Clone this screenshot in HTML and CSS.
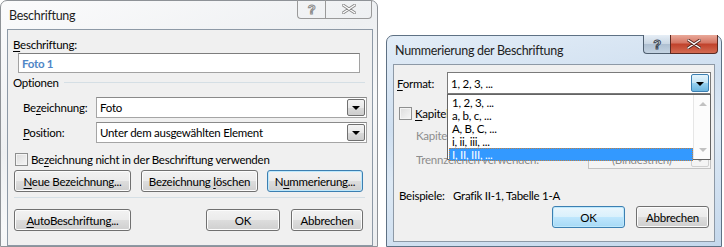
FILE: index.html
```html
<!DOCTYPE html>
<html lang="de">
<head>
<meta charset="utf-8"/>
<title>Beschriftung</title>
<link rel="stylesheet" href="styles.css">
</head>
<body>
<div class="desk">

	<!-- Dialog 1: Beschriftung (inaktiv) -->
	<div class="win win-left">
		<div class="titlebar">
			<span class="title">Beschriftung</span>
			<div class="capbtns">
				<span class="capbtn cap-help">?</span>
				<span class="capbtn cap-close">
					<svg width="14" height="10" viewBox="0 0 14 10"><path d="M1 1 L13 9 M13 1 L1 9" stroke="#8a8a8a" stroke-width="3" stroke-linecap="round"/><path d="M1 1 L13 9 M13 1 L1 9" stroke="#fff" stroke-width="1.2" stroke-linecap="round"/></svg>
				</span>
			</div>
		</div>
		<div class="client client-left">
			<div class="row lbl-top"><span><u>B</u>eschriftung:</span></div>
			<div class="textbox">Foto 1</div>
			<div class="group-head"><span>Optionen</span><span class="group-line"></span></div>
			<div class="row field first-field">
				<span class="field-lbl">Be<u>z</u>eichnung:</span>
				<div class="combo wide"><span class="combo-text">Foto</span><span class="combo-btn"><i class="arrow"></i></span></div>
			</div>
			<div class="row field">
				<span class="field-lbl"><u>P</u>osition:</span>
				<div class="combo wide"><span class="combo-text">Unter dem ausgewählten Element</span><span class="combo-btn"><i class="arrow"></i></span></div>
			</div>
			<div class="row check-row">
				<span class="checkbox"></span>
				<span>Be<u>z</u>eichnung nicht in der Beschriftung verwenden</span>
			</div>
			<div class="row btn-row">
				<span class="btn w117"><span><u>N</u>eue Bezeichnung...</span></span>
				<span class="btn w117"><span>Bezeichnung <u>l</u>öschen</span></span>
				<span class="btn w96 focus"><span>N<u>u</u>mmerierung...</span></span>
			</div>
			<div class="sep"></div>
			<div class="row btn-row bottom-row">
				<span class="btn w117"><span><u>A</u>utoBeschriftung...</span></span>
				<span class="btn w74 push">OK</span>
				<span class="btn w72">Abbrechen</span>
			</div>
		</div>
	</div>

	<!-- Dialog 2: Nummerierung der Beschriftung (aktiv) -->
	<div class="win win-right">
		<div class="titlebar">
			<span class="title">Nummerierung der Beschriftung</span>
			<div class="capbtns">
				<span class="capbtn cap-help">?</span>
				<span class="capbtn cap-close">
					<svg width="14" height="10" viewBox="0 0 14 10"><path d="M1 1 L13 9 M13 1 L1 9" stroke="#5a2a22" stroke-width="3.2" stroke-linecap="round"/><path d="M1 1 L13 9 M13 1 L1 9" stroke="#fff" stroke-width="1.4" stroke-linecap="round"/></svg>
				</span>
			</div>
		</div>
		<div class="client client-right">
			<div class="row fmt-row">
				<span class="fmt-lbl"><u>F</u>ormat:</span>
				<div class="combo fmt-combo"><span class="combo-text">1, 2, 3, ...</span><span class="combo-btn hot"><i class="arrow"></i></span></div>
			</div>
			<div class="row check-row kap-row">
				<span class="checkbox"></span>
				<span><u>K</u>apitelnummer einbeziehen</span>
			</div>
			<div class="row sub-row dis kap2">
				<span class="sub-lbl">Kapitel beginnt mit Formatvorlage:</span>
				<div class="combo dis-combo"><span class="combo-text">Überschrift 1</span><span class="combo-btn"><i class="arrow"></i></span></div>
			</div>
			<div class="row sub-row dis trenn">
				<span class="sub-lbl">Trennzeichen verwenden:</span>
				<div class="combo dis-combo"><span class="combo-text"><span class="dash">-</span>(Bindestrich)</span><span class="combo-btn"><i class="arrow"></i></span></div>
			</div>
			<div class="row beisp">
				<span class="beisp-lbl">Beispiele:</span>
				<span>Grafik II-1, Tabelle 1-A</span>
			</div>
			<div class="row btn-row right-btns">
				<span class="btn w73 default">OK</span>
				<span class="btn w73">Abbrechen</span>
			</div>

			<!-- aufgeklappte Liste -->
			<div class="droplist">
				<ul>
					<li>1, 2, 3, ...</li>
					<li>a, b, c, ...</li>
					<li>A, B, C, ...</li>
					<li>i, ii, iii, ...</li>
					<li class="sel">I, II, III, ...</li>
				</ul>
				<div class="vscroll">
					<i class="sarrow up"></i>
					<i class="sarrow down"></i>
				</div>
			</div>
		</div>
	</div>

</div>
</body>
</html>
```

FILE: styles.css
```css
*{margin:0; padding:0; box-sizing:border-box;}
li{list-style:none;}
u{text-decoration:underline; text-underline-offset:2px;}

body{ background:#fff; font-family:"Lato","Liberation Sans",sans-serif; font-size:11.5px; letter-spacing:-0.25px; color:#000; }
.desk{ position:relative; width:724px; height:247px; overflow:hidden; }

/* Fenster */
.win{ position:absolute; border:1px solid #8e9297; border-radius:7px 7px 0 0; display:flex; flex-direction:column; }
	.win-left{ left:0; top:0; width:378px; height:247px;
		background:linear-gradient(160deg,#fbfbfc 0%,#eef0f2 40%,#f7f8f9 60%,#eceef0 100%); }
	.win-right{ left:386px; top:35px; width:336px; height:212px; border-color:#5e7184;
		background:linear-gradient(170deg,#e3edf7 0%,#cfdff0 35%,#dde9f5 55%,#c5d8ec 100%); }

.titlebar{ position:relative; height:28px; display:flex; align-items:center; flex-shrink:0; }
	.title{ padding-left:8px; font-size:12.5px; letter-spacing:-0.3px; color:#1e1e1e; }
	.capbtns{ position:absolute; top:-1px; right:5px; display:flex; }
		.capbtn{ height:19px; display:flex; align-items:center; justify-content:center; border:1px solid #9a9a9a; border-top:none; }
		.win-left .cap-help{ width:28px; border-radius:0 0 0 4px; border-right:none; color:#fff; -webkit-text-stroke:1px #8a8a8a; font-weight:bold; font-size:13px; font-family:"Liberation Sans",sans-serif; }
		.win-left .cap-close{ width:47px; border-radius:0 0 4px 0; }
	.win-right .capbtns{ right:3px; }
		.win-right .capbtn{ height:19px; border-color:#4f5f70; }
		.win-right .cap-help{ width:27px; border-right:none; border-radius:0 0 0 4px; background:linear-gradient(#e6eef6,#c9d6e3 50%,#aebfd1 51%,#c4d3e2); color:#fff; -webkit-text-stroke:1px #3d4a57; font-weight:bold; font-size:13px; font-family:"Liberation Sans",sans-serif; }
		.win-right .cap-close{ width:48px; border-radius:0 0 4px 0; border-color:#5b2a22; background:linear-gradient(#e9a99a,#d47462 45%,#c0412b 50%,#d36b52 100%); }

.client{ position:relative; background:#f0f0f0; border:1px solid #8d99a6; }
	.client-left{ margin-left:6px; width:366px; height:217px; padding-top:6px; }
	.client-right{ margin-left:6px; width:322px; height:178px; }

.row{ display:flex; align-items:center; white-space:nowrap; }

/* Dialog 1 */
.lbl-top{ height:16px; padding-left:5px; }
.textbox{ margin:1px 0 0 10px; width:342px; height:20px; border:1px solid #a2a2a2; border-top-color:#7d7d7d; background:#fff;
	padding-left:3px; display:flex; align-items:center; font-weight:bold; color:#4f86c6; }
.group-head{ display:flex; align-items:center; height:16px; margin-top:1px; padding-left:5px; }
	.group-line{ flex:1; height:1px; background:#d5dfe5; margin:0 7px 0 5px; }
.field{ height:21px; padding-left:15px; margin-top:4px; }
	.first-field{ margin-top:7px; }
	.field-lbl{ width:73px; }
.combo{ display:flex; align-items:stretch; height:21px; border:1px solid #a5a5a5; border-top-color:#8a8a8a; background:#fff; }
	.combo.wide{ width:271px; }
	.combo-text{ flex:1; display:flex; align-items:center; padding-left:3px; white-space:nowrap; overflow:hidden; }
	.combo-btn{ width:18px; margin:1px 1px 1px 0; border:1px solid #707070; border-radius:2px;
		background:linear-gradient(#f4f4f4,#e9e9e9 50%,#dadada 51%,#cdcdcd); display:flex; align-items:center; justify-content:center; }
	.arrow{ width:0; height:0; border-left:4px solid transparent; border-right:4px solid transparent; border-top:4px solid #000; margin-top:1px; }

.check-row{ height:16px; margin-top:8px; padding-left:7px; }
	.checkbox{ width:13px; height:13px; border:1px solid #8e8f8f; background:linear-gradient(135deg,#dcdcdc,#f6f6f6); box-shadow:inset 0 0 0 1px #f4f4f4; margin-right:3px; flex-shrink:0; }

.btn-row{ margin-top:3px; padding-left:6px; }
	.btn{ height:22px; display:flex; align-items:center; justify-content:center; border:1px solid #707070; border-radius:3px;
		background:linear-gradient(#f2f2f2,#ebebeb 50%,#dddddd 51%,#cfcfcf); box-shadow:inset 0 0 0 1px #fcfcfc; white-space:nowrap; }
	.btn + .btn{ margin-left:10px; }
	.w117{ width:117px; }
	.w96{ width:96px; margin-left:9px !important; }
	.w74{ width:74px; }
	.w73{ width:73px; }
	.w72{ width:72px; margin-left:11px !important; }
	.btn.default{ border-color:#3c7fb1; box-shadow:inset 0 0 0 1px #bde8fc; background:linear-gradient(#eaf6fd,#d9f0fc 50%,#bee6fd 51%,#a7d9f5); }
	.btn.focus{ border-color:#3c7fb1; box-shadow:inset 0 0 0 1px #bde8fc; }
.sep{ height:1px; background:#d5dfe5; margin:5px 7px 0 6px; }
.bottom-row{ margin-top:11px; padding-right:9px; }
	.push{ margin-left:auto !important; }

/* Dialog 2 */
.fmt-row{ margin-top:7px; padding-left:3px; height:22px; }
	.fmt-lbl{ width:50px; }
	.fmt-combo{ width:264px; height:22px; border-color:#7a7a7a; }
	.combo-btn.hot{ border-color:#3c7fb1; background:linear-gradient(#e5f4fc,#c4e5f6 50%,#98d1ef 51%,#6cb6e0); }
.kap-row{ margin-top:13px; padding-left:5px; height:13px; }
.dis{ color:#8d8d8d; }
.sub-row{ padding-left:22px; height:20px; }
	.kap2{ margin-top:5px; }
	.trenn{ margin-top:4px; }
	.sub-lbl{ width:172px; overflow:hidden; }
	.dis-combo{ width:123px; height:20px; border-color:#c4c4c4; background:#f4f4f4; }
	.dis-combo .combo-text{ color:#8d8d8d; }
	.dash{ width:20px; padding-left:2px; }
	.dis-combo .combo-btn{ border-color:#d0d0d0; background:#f4f4f4; }
	.dis-combo .arrow{ border-top-color:#b0b0b0; }
.beisp{ margin-top:18px; padding-left:5px; height:16px; }
	.beisp-lbl{ width:54px; }
.right-btns{ margin-top:3px; padding-left:158px; }
	.right-btns .btn + .btn{ margin-left:11px; }

.droplist{ position:absolute; left:53px; top:29px; width:264px; height:66px; border:1px solid #646464; background:#fff; display:flex; }
	.droplist ul{ flex:1; padding:1px 0 0 1px; }
	.droplist li{ height:13px; line-height:13px; padding-left:3px; }
	.droplist li.sel{ background:#3399ff; color:#fff; outline:1px dotted #c08040; outline-offset:-1px; }
	.vscroll{ width:17px; border-left:1px solid #e6e6e6; background:#fcfcfc; position:relative; }
		.sarrow{ position:absolute; left:5px; width:0; height:0; border-left:4px solid transparent; border-right:4px solid transparent; }
		.sarrow.up{ top:7px; border-bottom:4px solid #c2c2c2; }
		.sarrow.down{ bottom:7px; border-top:4px solid #c2c2c2; }
```
